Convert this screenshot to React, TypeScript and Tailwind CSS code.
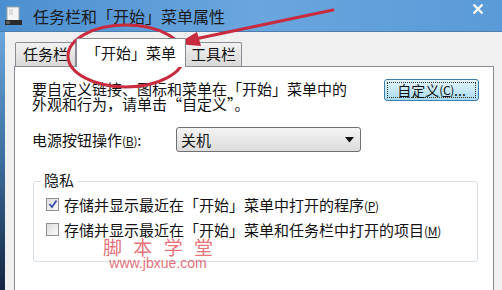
import React from 'react'

const cjk = { fontFamily: '"Noto Sans CJK SC", "Noto Sans", sans-serif' }

function Key({ k }: { k: string }) {
  return (
    <span className="text-[12px] tracking-tight">
      (<span className="underline">{k}</span>)
    </span>
  )
}

function CheckBox({ checked }: { checked?: boolean }) {
  return (
    <div className="w-[13px] h-[13px] border border-[#8f8f8f] bg-gradient-to-br from-[#dcdcdc] to-[#fbfbfb] flex items-center justify-center shrink-0">
      {checked && (
        <svg width="10" height="10" viewBox="0 0 10 10">
          <path d="M1.5 5 L4 8 L8.5 1.5" fill="none" stroke="#3a4fa8" strokeWidth="1.8" />
        </svg>
      )}
    </div>
  )
}

export default function App() {
  return (
    <div className="relative w-[502px] h-[290px] overflow-hidden bg-[#f0f0f0] text-[#111] flex flex-col" style={cjk}>
      {/* title bar */}
      <div className="h-[32px] shrink-0 flex items-center bg-gradient-to-r from-[#4c8fd0] via-[#6aa6de] to-[#5a9ad8] border-b border-[#4d7fae]">
        <svg width="20" height="20" viewBox="0 0 20 20" className="ml-[4px]">
          <rect x="3" y="1" width="12" height="14" fill="#f4f4f4" stroke="#9aa" />
          <rect x="5" y="3" width="4" height="6" fill="#dcdcdc" />
          <rect x="1" y="14" width="17" height="5" fill="#2a2a2a" />
          <rect x="2" y="15" width="4" height="3" fill="#5a5a5a" />
        </svg>
        <span className="ml-[9px] text-[16px] text-[#1a1a1a] leading-none">任务栏和「开始」菜单属性</span>
        <div className="flex-1" />
        <svg width="12" height="12" viewBox="0 0 12 12" className="mr-[18px] -mt-[14px]">
          <path d="M1.5 1.5 L10.5 10.5 M10.5 1.5 L1.5 10.5" stroke="#fff" strokeWidth="2.4" />
        </svg>
      </div>

      <div className="flex-1 flex">
        <div className="w-[5px] bg-gradient-to-b from-[#6aa6de] via-[#3c6e9e] to-[#142640]" />
        <div className="flex-1 flex flex-col pl-[9px] pr-[8px] pt-[5px]">
          {/* tabs */}
          <div className="flex items-end h-[29px] pl-[1px] text-[15px]">
            <div className="h-[24px] px-[7px] flex items-center border border-b-0 border-[#898c95] bg-gradient-to-b from-[#f2f2f2] to-[#d8d8d8] rounded-t-[2px]">
              任务栏
            </div>
            <div className="h-[29px] px-[9px] -mb-[1px] flex items-center border border-b-0 border-[#898c95] bg-white rounded-t-[2px] relative z-10">
              「开始」菜单
            </div>
            <div className="h-[24px] px-[5px] flex items-center border border-b-0 border-l-0 border-[#898c95] bg-gradient-to-b from-[#f2f2f2] to-[#d8d8d8] rounded-t-[2px]">
              工具栏
            </div>
          </div>

          {/* panel */}
          <div className="flex-1 bg-white border border-b-0 border-[#898c95] pl-[17px] pr-[14px] pt-[12px] text-[15px]">
            <div className="flex justify-between">
              <div className="leading-[15px] pt-[2px]">
                <div>要自定义链接、图标和菜单在「开始」菜单中的</div>
                <div>外观和行为，请单击“自定义”。</div>
              </div>
              <div className="w-[95px] h-[22px] rounded-[3px] border border-[#3c7fb1] bg-gradient-to-b from-[#e3f5fc] to-[#a9daee] p-[2px]">
                <div className="h-full border border-dotted border-[#333] flex items-center justify-center leading-none text-[14px]">
                  自定义<Key k="C" />...
                </div>
              </div>
            </div>

            <div className="flex items-center mt-[16px]">
              <div className="w-[144px] leading-none">
                电源按钮操作<Key k="B" />:
              </div>
              <div className="w-[185px] h-[25px] rounded-[3px] border border-[#707070] bg-gradient-to-b from-[#f4f4f4] to-[#dcdcdc] flex items-center pl-[4px] pr-[6px]">
                <span className="flex-1 leading-none">关机</span>
                <svg width="9" height="6" viewBox="0 0 9 6">
                  <path d="M0 0 H9 L4.5 5.5 Z" fill="#111" />
                </svg>
              </div>
            </div>

            {/* group */}
            <div className="relative mt-[29px] ml-[1px] w-[445px] h-[81px] border border-[#d5dfe5] rounded-[3px] pt-[14px] pl-[12px]">
              <span className="absolute -top-[10px] left-[7px] bg-white px-[3px] leading-none">隐私</span>
              <div className="flex items-center gap-[5px] h-[16px]">
                <CheckBox checked />
                <span className="leading-none">存储并显示最近在「开始」菜单中打开的程序<Key k="P" /></span>
              </div>
              <div className="flex items-center gap-[5px] h-[16px] mt-[9px]">
                <CheckBox />
                <span className="leading-none">存储并显示最近在「开始」菜单和任务栏中打开的项目<Key k="M" /></span>
              </div>
            </div>
          </div>
        </div>
      </div>

      {/* watermark */}
      <div className="absolute left-[103px] top-[237px] w-[110px] text-[#e0505a] opacity-80 pointer-events-none">
        <div className="flex justify-between text-[19px] leading-[19px]">
          <span>脚</span><span>本</span><span>学</span><span>堂</span>
        </div>
        <div className="text-[14px] leading-[14px] text-center" style={{ fontFamily: '"Liberation Sans", Arial, sans-serif' }}>
          www.jbxue.com
        </div>
      </div>

      {/* annotation */}
      <svg className="absolute left-0 top-0 pointer-events-none" width="502" height="290" viewBox="0 0 502 290">
        <ellipse cx="126" cy="56" rx="58" ry="31" fill="none" stroke="#c82a3e" strokeWidth="3" />
        <path d="M333 10 L195 39" stroke="#c82a3e" strokeWidth="3" fill="none" strokeLinecap="round" />
        <path d="M177 44 L197 32 L201 46 Z" fill="#c82a3e" />
      </svg>
    </div>
  )
}
